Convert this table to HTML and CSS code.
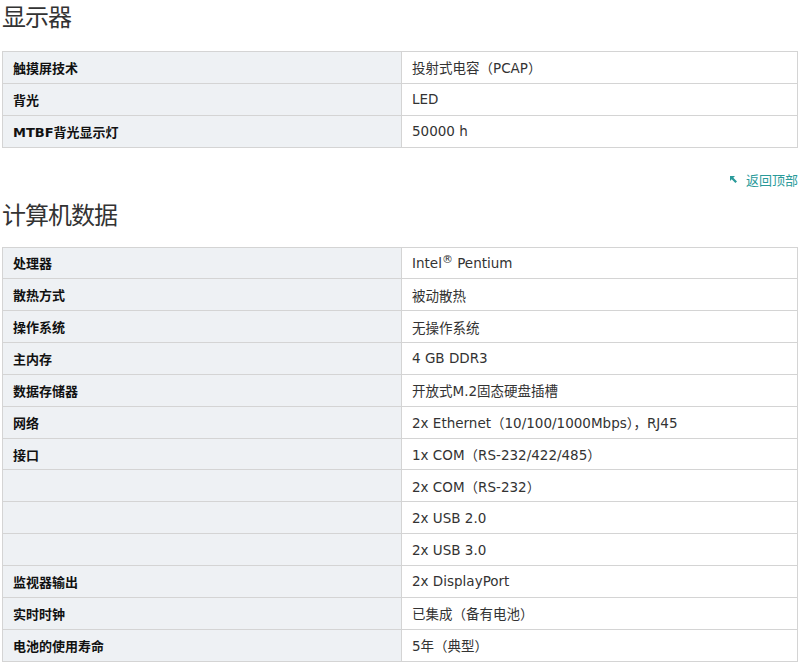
FILE: index.html
```html
<!DOCTYPE html>
<html lang="zh-CN">

<head>
  <meta charset="UTF-8">
  <meta name="viewport" content="width=device-width, initial-scale=1.0">
  <title>技术数据</title>
  <link rel="stylesheet" href="styles.css">
</head>

<body>
  <section class="spec">
    <h2>显示器</h2>
    <table>
      <tr><th>触摸屏技术</th><td>投射式电容（PCAP）</td></tr>
      <tr><th>背光</th><td>LED</td></tr>
      <tr><th>MTBF背光显示灯</th><td>50000 h</td></tr>
    </table>
    <div class="to-top">
      <a href="#">
        <svg width="9" height="9" viewBox="0 0 9 9"><path d="M1 1h5L4.3 2.7 8 6.4 6.4 8 2.7 4.3 1 6z" fill="#2a9a9a"/></svg>
        返回顶部
      </a>
    </div>
  </section>

  <section class="spec">
    <h2>计算机数据</h2>
    <table>
      <tr><th>处理器</th><td>Intel<sup>®</sup> Pentium</td></tr>
      <tr><th>散热方式</th><td>被动散热</td></tr>
      <tr><th>操作系统</th><td>无操作系统</td></tr>
      <tr><th>主内存</th><td>4 GB DDR3</td></tr>
      <tr><th>数据存储器</th><td>开放式M.2固态硬盘插槽</td></tr>
      <tr><th>网络</th><td>2x Ethernet（10/100/1000Mbps），RJ45</td></tr>
      <tr><th>接口</th><td>1x COM（RS-232/422/485）</td></tr>
      <tr><th></th><td>2x COM（RS-232）</td></tr>
      <tr><th></th><td>2x USB 2.0</td></tr>
      <tr><th></th><td>2x USB 3.0</td></tr>
      <tr><th>监视器输出</th><td>2x DisplayPort</td></tr>
      <tr><th>实时时钟</th><td>已集成（备有电池）</td></tr>
      <tr><th>电池的使用寿命</th><td>5年（典型）</td></tr>
    </table>
  </section>
</body>

</html>
```

FILE: styles.css
```css
* {
  font-family: 'DejaVu Sans', 'Noto Sans CJK SC', sans-serif;
}

body {
  margin: 0;
  padding: 0 2px;
  color: #333;
}

.spec h2 {
  margin: 0;
  height: 51px;
  padding-top: 2px;
  box-sizing: border-box;
  font-size: 24px;
  font-weight: normal;
  line-height: 32px;
  letter-spacing: -1px;
}

.spec+.spec h2 {
  padding-top: 4px;
}

.spec table {
  width: 796px;
  border-collapse: collapse;
  table-layout: fixed;
  font-size: 13px;
}

.spec th,
.spec td {
  height: 30.85px;
  padding: 0 10px;
  border: 1px solid #d4d4d4;
  text-align: left;
  vertical-align: middle;
}

.spec th {
  width: 378px;
  background-color: #eef1f4;
  color: #111;
  font-weight: bold;
}

.spec td {
  background-color: #fff;
  color: #333;
  font-size: 13.5px;
}

.spec sup {
  font-size: 11px;
  line-height: 0;
}

.to-top {
  display: flex;
  justify-content: flex-end;
  align-items: flex-start;
  height: 48px;
  padding-top: 22px;
  box-sizing: border-box;
}

.to-top a {
  display: flex;
  align-items: center;
  gap: 8px;
  color: #2a9a9a;
  font-size: 13px;
  text-decoration: none;
}
```
